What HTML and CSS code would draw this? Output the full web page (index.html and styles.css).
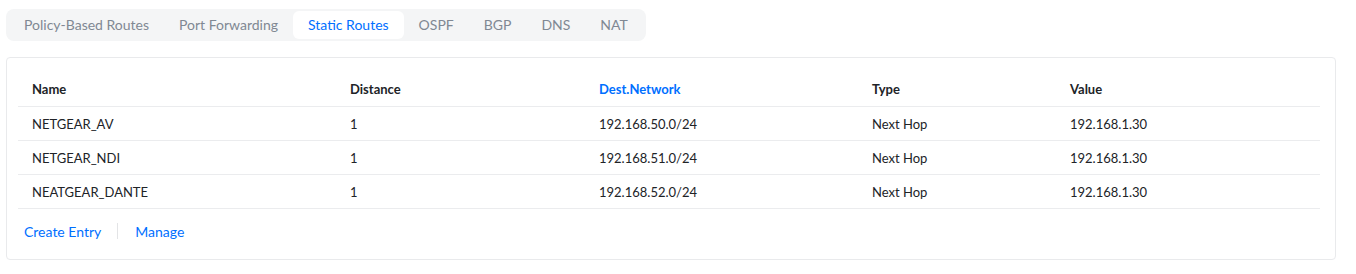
FILE: index.html
```html
<!DOCTYPE html>
<html lang="en">
<head>
  <meta charset="UTF-8" />
  <title>Static Routes</title>
  <link rel="stylesheet" href="styles.css">
</head>
<body>

  <nav class="tabs">
    <div class="tab">Policy-Based Routes</div>
    <div class="tab">Port Forwarding</div>
    <div class="tab active">Static Routes</div>
    <div class="tab">OSPF</div>
    <div class="tab">BGP</div>
    <div class="tab">DNS</div>
    <div class="tab">NAT</div>
  </nav>

  <div class="card">
    <table>
      <thead>
        <tr>
          <th class="col-name">Name</th>
          <th class="col-dist">Distance</th>
          <th class="col-net sorted">Dest.Network</th>
          <th class="col-type">Type</th>
          <th>Value</th>
        </tr>
      </thead>
      <tbody>
        <tr>
          <td>NETGEAR_AV</td>
          <td>1</td>
          <td>192.168.50.0/24</td>
          <td>Next Hop</td>
          <td>192.168.1.30</td>
        </tr>
        <tr>
          <td>NETGEAR_NDI</td>
          <td>1</td>
          <td>192.168.51.0/24</td>
          <td>Next Hop</td>
          <td>192.168.1.30</td>
        </tr>
        <tr>
          <td>NEATGEAR_DANTE</td>
          <td>1</td>
          <td>192.168.52.0/24</td>
          <td>Next Hop</td>
          <td>192.168.1.30</td>
        </tr>
      </tbody>
    </table>

    <div class="actions">
      <a class="link">Create Entry</a>
      <span class="divider"></span>
      <a class="link">Manage</a>
    </div>
  </div>

</body>
</html>
```

FILE: styles.css
```css
body {
  margin: 0;
  padding: 9px 20px 9px 6px;
  font-family: Lato, "Liberation Sans", sans-serif;
  background: #ffffff;
  color: #212327;
}

.tabs {
  display: inline-flex;
  background: #f4f5f6;
  border-radius: 8px;
  padding: 2px 3px;
}

.tab {
  padding: 0 15px;
  height: 28px;
  line-height: 28px;
  font-size: 14px;
  color: #808893;
  border-radius: 6px;
}

.tab.active {
  background: #ffffff;
  color: #006fff;
}

.card {
  margin-top: 16px;
  border: 1px solid #e9eaec;
  border-radius: 4px;
  padding: 14px 15px 0 11px;
}

table {
  width: 100%;
  border-collapse: collapse;
  font-size: 13px;
}

th, td {
  text-align: left;
  padding: 0 14px;
  height: 33px;
  border-bottom: 1px solid #ebecee;
}

th {
  height: 34px;
  font-weight: bold;
  color: #212327;
}

th.sorted {
  color: #006fff;
}

.col-name { width: 290px; }
.col-dist { width: 221px; }
.col-net { width: 245px; }
.col-type { width: 170px; }

.actions {
  display: flex;
  align-items: center;
  height: 44px;
  padding: 0 0 6px 6px;
  font-size: 14px;
}

.link {
  color: #006fff;
  cursor: pointer;
}

.divider {
  width: 1px;
  height: 16px;
  background: #e3e4e6;
  margin: 0 17px 0 16px;
}
```
